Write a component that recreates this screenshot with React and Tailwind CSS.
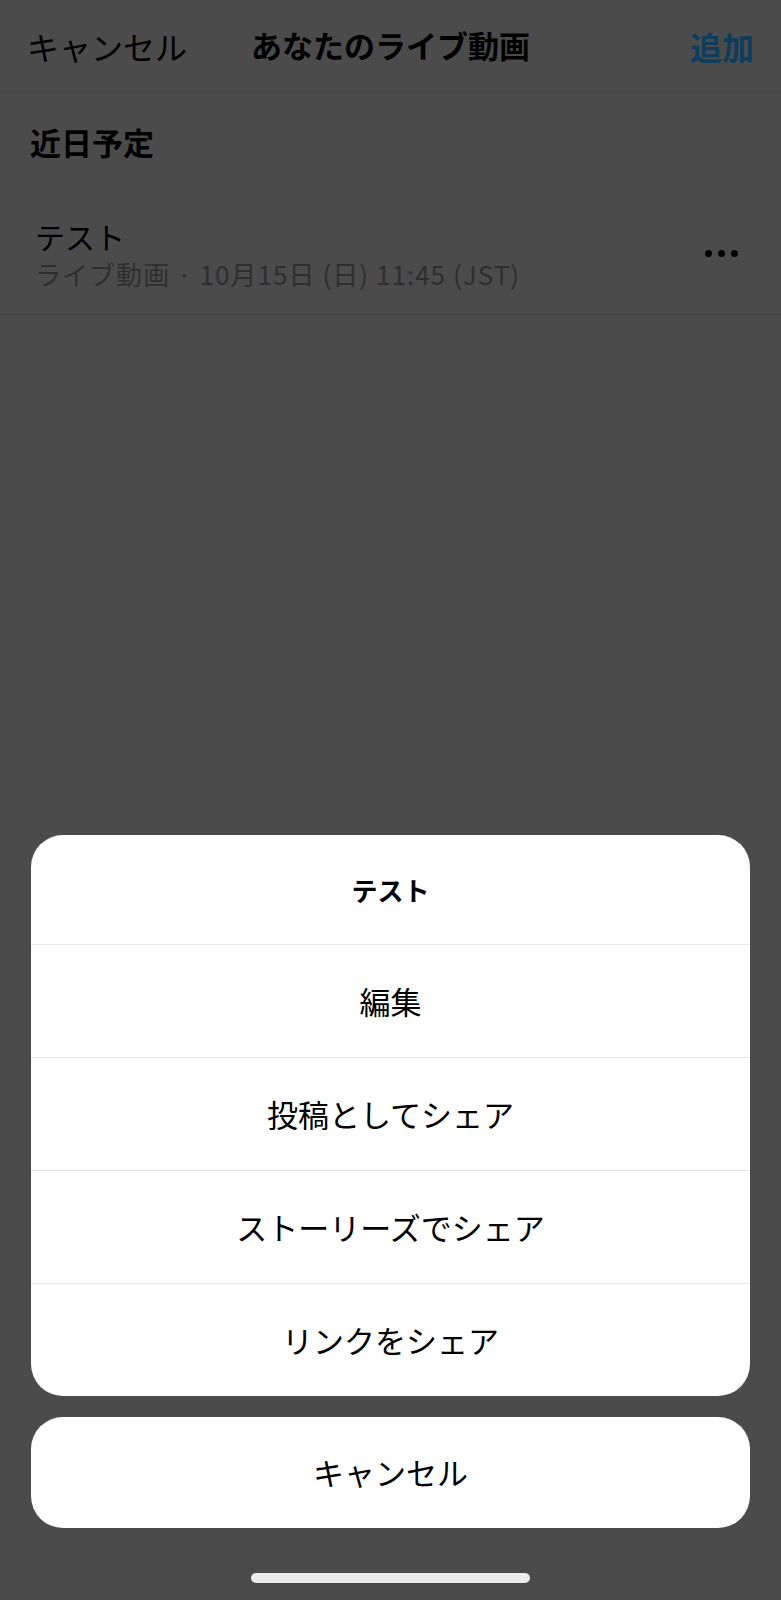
import React from 'react'

const font = { fontFamily: '"Noto Sans CJK JP", "Noto Sans", sans-serif' }

// ─── Header ──────────────────────────────────────────────────────────────────
function Header() {
  return (
    <div className="grid h-[92px] grid-cols-[1fr_auto_1fr] items-center border-b border-[#444444] px-[27px]">
      <span className="justify-self-start text-[32px] text-black">キャンセル</span>
      <span className="text-[31px] font-bold text-black">あなたのライブ動画</span>
      <span className="justify-self-end text-[32px] font-bold text-[#0d3d5e]">追加</span>
    </div>
  )
}

// ─── Action sheet ────────────────────────────────────────────────────────────
const actions = ['編集', '投稿としてシェア', 'ストーリーズでシェア', 'リンクをシェア']

function ActionSheet() {
  return (
    <div className="flex flex-col gap-[21px] px-[31px]">
      <div className="overflow-hidden rounded-[32px] bg-white">
        <div className="flex h-[109px] items-center justify-center text-[26px] font-bold text-black">
          テスト
        </div>
        {actions.map(a => (
          <div
            key={a}
            className="flex h-[113px] items-center justify-center border-t border-[#e6e6e6] text-[31px] text-black"
          >
            {a}
          </div>
        ))}
      </div>
      <div className="flex h-[111px] items-center justify-center rounded-[32px] bg-white text-[31px] text-black">
        キャンセル
      </div>
    </div>
  )
}

export default function App() {
  return (
    <div className="flex h-[1600px] w-full flex-col bg-[#4b4b4b]" style={font}>
      <Header />

      {/* Section title */}
      <div className="flex h-[101px] items-center px-[30px]">
        <span className="text-[31px] font-bold text-black">近日予定</span>
      </div>

      {/* Scheduled live row */}
      <div className="flex h-[122px] items-center justify-between border-b border-[#444444] pl-[35px] pr-[43px]">
        <div className="flex flex-col gap-[4px]">
          <span className="text-[30px] leading-[36px] text-black">テスト</span>
          <span className="text-[26px] leading-[32px] tracking-[0.04em] text-[#2e2e2e]">
            ライブ動画 · 10月15日 (日) 11:45 (JST)
          </span>
        </div>
        <div className="flex gap-[6px]">
          <span className="h-[7px] w-[7px] rounded-full bg-black" />
          <span className="h-[7px] w-[7px] rounded-full bg-black" />
          <span className="h-[7px] w-[7px] rounded-full bg-black" />
        </div>
      </div>

      <div className="mt-auto">
        <ActionSheet />
        <div className="flex justify-center pt-[45px] pb-[17px]">
          <div className="h-[10px] w-[279px] rounded-full bg-[#ececec]" />
        </div>
      </div>
    </div>
  )
}
